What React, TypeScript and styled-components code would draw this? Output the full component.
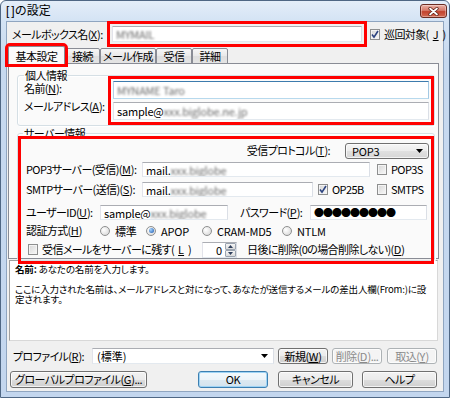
import React from "react";
import styled, { createGlobalStyle, css } from "styled-components";

const FONT = `"Noto Sans CJK JP", "Noto Sans", "DejaVu Sans", sans-serif`;

const GlobalStyle = createGlobalStyle`
  html, body { margin: 0; padding: 0; background: #ffffff; }
  body {
    font-family: ${FONT};
    font-size: 11px;
    color: #000;
    font-feature-settings: "palt";
  }
  *, *::before, *::after { box-sizing: border-box; }
`;

const redMark = css`
  outline: 3px solid #ff0000;
  outline-offset: 2px;
`;

const Window = styled.div`
  width: 450px;
  height: 398px;
  display: flex;
  flex-direction: column;
  border: 1px solid #4f6784;
  border-radius: 6px 6px 0 0;
  background: linear-gradient(180deg, #e4eef9 0px, #d4e3f4 20px, #c7d9ef 60px, #c3d6ee 100%);
  padding: 0 5px 5px 5px;
  overflow: hidden;
`;

const TitleBar = styled.div`
  height: 20px;
  flex: none;
  display: flex;
  align-items: flex-start;
  justify-content: space-between;
`;

const Title = styled.span`
  font-family: "Liberation Sans", "Noto Sans CJK JP", sans-serif;
  font-size: 12px;
  line-height: 21px;
  font-feature-settings: normal;
  letter-spacing: 0;
`;

const OpenBracket = styled.span`
  letter-spacing: 2px;
`;

const CloseButton = styled.div`
  width: 27px;
  height: 14px;
  margin-top: 3px;
  margin-right: -3px;
  border: 1px solid #6b2c22;
  border-radius: 3px;
  background: linear-gradient(180deg, #eab0a4 0%, #d77b6b 45%, #c2432e 55%, #d46a52 100%);
  box-shadow: inset 0 0 0 1px rgba(255, 255, 255, 0.35);
  display: flex;
  align-items: center;
  justify-content: center;
`;

const Client = styled.div`
  flex: 1;
  display: flex;
  flex-direction: column;
  background: #f0f0f0;
  border: 1px solid #8fa5c0;
`;

const TopRow = styled.div`
  height: 24px;
  flex: none;
  display: flex;
  align-items: center;
  padding-left: 5px;
`;

const Label = styled.span<{ $w?: number; $ml?: number }>`
  ${(p) => (p.$w ? `width: ${p.$w}px;` : "")}
  margin-left: ${(p) => p.$ml ?? 0}px;
  flex: none;
  white-space: nowrap;
  letter-spacing: -0.6px;
  line-height: 15px;
`;

const U = styled.span`
  text-decoration: underline;
  text-underline-offset: 1px;
  letter-spacing: 0;
`;

const TextBox = styled.div<{ $w?: number; $h?: number; $focus?: boolean; $mark?: boolean }>`
  ${(p) => (p.$w ? `width: ${p.$w}px; flex: none;` : "flex: 1;")}
  height: ${(p) => p.$h ?? 15}px;
  background: #ffffff;
  border: 1px solid;
  border-color: ${(p) =>
    p.$focus ? "#3d7bad #a4c9e3 #b7d9ed #b5cfe7" : "#abadb3 #dbdfe6 #e3e9ef #e2e3ea"};
  display: flex;
  align-items: center;
  padding: 0 3px;
  white-space: nowrap;
  overflow: hidden;
  letter-spacing: -0.2px;
  ${(p) => p.$mark && redMark}
`;

const Blurred = styled.span`
  color: #6d6d6d;
  filter: blur(1.1px);
`;

const CheckItem = styled.label<{ $w?: number; $ml?: number }>`
  display: inline-flex;
  align-items: center;
  gap: 4px;
  flex: none;
  ${(p) => (p.$w ? `width: ${p.$w}px;` : "")}
  margin-left: ${(p) => p.$ml ?? 0}px;
  white-space: nowrap;
  letter-spacing: -0.6px;
  line-height: 15px;
`;

const Check = styled.span`
  width: 10px;
  height: 11px;
  flex: none;
  border: 1px solid #8e8f8f;
  background: linear-gradient(135deg, #d6d6d6, #f9f9f9);
  box-shadow: inset 0 0 0 1px #f4f4f4;
  display: inline-flex;
  align-items: center;
  justify-content: center;
`;

const Radio = styled.span`
  width: 10px;
  height: 10px;
  flex: none;
  border-radius: 50%;
  border: 1px solid #8e8f8f;
  background: radial-gradient(circle at 35% 35%, #ffffff, #d2d2d2);
  display: inline-flex;
  align-items: center;
  justify-content: center;
`;

const RadioDot = styled.span`
  width: 5px;
  height: 5px;
  border-radius: 50%;
  background: radial-gradient(circle at 35% 35%, #a8d6ff, #1553ad);
`;

const TabStrip = styled.div`
  height: 18px;
  flex: none;
  display: flex;
  align-items: flex-end;
  padding-left: 3px;
  margin-bottom: -1px;
  position: relative;
  z-index: 2;
`;

const Tab = styled.div<{ $w: number; $active?: boolean }>`
  width: ${(p) => p.$w}px;
  height: ${(p) => (p.$active ? 18 : 16)}px;
  margin-left: ${(p) => (p.$active ? -2 : 0)}px;
  flex: none;
  border: 1px solid #898c95;
  border-bottom: ${(p) => (p.$active ? "none" : "1px solid #898c95")};
  border-radius: 2px 2px 0 0;
  background: ${(p) => (p.$active ? "#fafafa" : "linear-gradient(#f6f6f6, #e9e9e9 50%, #dedede 51%, #e4e4e4)")};
  display: flex;
  align-items: center;
  justify-content: center;
  letter-spacing: -0.5px;
  white-space: nowrap;
  position: relative;
  z-index: ${(p) => (p.$active ? 3 : 1)};
  ${(p) =>
    p.$active &&
    css`
      outline: 3px solid #ff0000;
      outline-offset: 0px;
    `}
`;

const TabPanel = styled.div`
  margin-left: 1px;
  width: 431px;
  height: 196px;
  flex: none;
  border: 1px solid #898c95;
  background: #fafafa;
  position: relative;
  z-index: 1;
  display: flex;
  flex-direction: column;
  padding: 5px 3px 0 8px;
`;

const Group = styled.fieldset<{ $mt?: number; $pl: number; $pb: number }>`
  margin: ${(p) => p.$mt ?? 0}px 0 0 0;
  padding: 0 5px ${(p) => p.$pb}px ${(p) => p.$pl}px;
  border: 1px solid #d5dfe5;
  border-radius: 3px;
  box-shadow: inset 1px 1px 0 #ffffff, 1px 1px 0 #ffffff;
  min-width: 0;
`;

const Legend = styled.legend`
  padding: 0 1px;
  line-height: 12px;
  letter-spacing: -0.5px;
`;

const PersonalBody = styled.div`
  display: flex;
`;

const LabelColumn = styled.div`
  width: 89px;
  flex: none;
  display: flex;
  flex-direction: column;
  gap: 3px;
`;

const InputColumn = styled.div`
  flex: 1;
  display: flex;
  flex-direction: column;
  gap: 3px;
  ${redMark}
`;

const ServerBody = styled.div`
  margin-top: 2px;
  padding: 0 0 2px 3px;
  display: flex;
  flex-direction: column;
  ${redMark}
`;

const Row = styled.div<{ $mt: number; $end?: boolean }>`
  height: 15px;
  margin-top: ${(p) => p.$mt}px;
  display: flex;
  align-items: center;
  justify-content: ${(p) => (p.$end ? "flex-end" : "flex-start")};
`;

const Select = styled.div<{ $w: number; $ml?: number }>`
  width: ${(p) => p.$w}px;
  height: 16px;
  flex: none;
  margin-left: ${(p) => p.$ml ?? 0}px;
  border: 1px solid #707070;
  border-radius: 3px;
  background: linear-gradient(#f6f6f6, #ececec 50%, #e0e0e0 51%, #d6d6d6);
  box-shadow: inset 0 0 0 1px rgba(255, 255, 255, 0.7);
  display: flex;
  align-items: center;
  justify-content: space-between;
  padding: 0 5px 0 6px;
  letter-spacing: -0.2px;
`;

const Password = styled.span`
  font-size: 10px;
  letter-spacing: -1px;
  line-height: 13px;
  font-feature-settings: normal;
`;

const RadioItem = styled.label<{ $w?: number }>`
  display: inline-flex;
  align-items: center;
  gap: 5px;
  flex: none;
  ${(p) => (p.$w ? `width: ${p.$w}px;` : "")}
  white-space: nowrap;
  letter-spacing: -0.2px;
`;

const Spin = styled.div`
  width: 35px;
  height: 16px;
  flex: none;
  display: flex;
  background: #ffffff;
  border: 1px solid;
  border-color: #abadb3 #dbdfe6 #e3e9ef #e2e3ea;
`;

const SpinValue = styled.span`
  flex: 1;
  text-align: right;
  padding-right: 3px;
  line-height: 14px;
`;

const SpinButtons = styled.div`
  width: 11px;
  flex: none;
  display: flex;
  flex-direction: column;
`;

const SpinBtn = styled.div`
  flex: 1;
  display: flex;
  align-items: center;
  justify-content: center;
  background: linear-gradient(#f6f6f6, #dadada);
  border: 1px solid #9ba4b0;
  border-radius: 1px;
`;

const HelpBox = styled.div`
  margin: 1px 0 0 2px;
  width: 429px;
  height: 81px;
  flex: none;
  background: #ffffff;
  border: 1px solid;
  border-color: #a0a0a0 #d8d8d8 #d8d8d8 #a0a0a0;
  padding: 3px 0 0 5px;
  font-size: 9.5px;
  line-height: 10px;
  letter-spacing: -0.15px;
  white-space: nowrap;
  overflow: hidden;
`;

const HelpLine = styled.div`
  height: 10px;
`;

const HelpKey = styled.span`
  font-weight: 700;
`;

const ProfileRow = styled.div`
  margin-top: 7px;
  height: 16px;
  flex: none;
  display: flex;
  align-items: center;
  padding-left: 6px;
`;

const Combo = styled.div`
  width: 182px;
  height: 16px;
  flex: none;
  background: #ffffff;
  border: 1px solid;
  border-color: #abadb3 #dbdfe6 #e3e9ef #e2e3ea;
  display: flex;
  align-items: center;
  justify-content: space-between;
  padding: 0 5px 0 4px;
`;

const Button = styled.button<{ $w: number; $ml?: number; $default?: boolean; $disabled?: boolean; $h?: number }>`
  width: ${(p) => p.$w}px;
  height: ${(p) => p.$h ?? 17}px;
  margin-left: ${(p) => p.$ml ?? 0}px;
  flex: none;
  padding: 0;
  font-family: ${FONT};
  font-size: 11px;
  font-feature-settings: "palt";
  letter-spacing: -0.5px;
  line-height: 1;
  color: ${(p) => (p.$disabled ? "#8a8a8a" : "#000")};
  border: 1px solid ${(p) => (p.$disabled ? "#adb2b5" : p.$default ? "#3c7fb1" : "#707070")};
  border-radius: 3px;
  background: ${(p) =>
    p.$disabled
      ? "#f4f4f4"
      : p.$default
      ? "linear-gradient(#f4f9fc, #ecf4f9 50%, #dde9f1 51%, #d3e3ee)"
      : "linear-gradient(#f2f2f2, #ebebeb 50%, #dddddd 51%, #cfcfcf)"};
  box-shadow: ${(p) =>
    p.$default ? "inset 0 0 0 1px #9fd4f5" : "inset 0 0 0 1px rgba(255, 255, 255, 0.75)"};
  display: flex;
  align-items: center;
  justify-content: center;
  white-space: nowrap;
`;

const BottomRow = styled.div`
  margin-top: 7px;
  height: 17px;
  flex: none;
  display: flex;
  align-items: center;
  justify-content: space-between;
  padding: 0 6px 0 3px;
`;

const ButtonGroup = styled.div`
  display: flex;
  align-items: center;
`;

const CheckMark = () => (
  <svg width="8" height="9" viewBox="0 0 8 9">
    <path d="M1 4.5 L3 7.2 L7 1" fill="none" stroke="#2c4380" strokeWidth="1.6" />
  </svg>
);

const DownArrow = () => (
  <svg width="7" height="4" viewBox="0 0 7 4">
    <path d="M0 0 H7 L3.5 4 Z" fill="#000" />
  </svg>
);

const TinyArrow = ({ up }: { up?: boolean }) => (
  <svg width="5" height="3" viewBox="0 0 5 3">
    <path d={up ? "M0 3 L2.5 0 L5 3 Z" : "M0 0 L2.5 3 L5 0 Z"} fill="#2f3f5c" />
  </svg>
);

const CloseIcon = () => (
  <svg width="11" height="9" viewBox="0 0 11 9">
    <path d="M2 1.5 L9 7.5 M9 1.5 L2 7.5" stroke="#5a1e14" strokeWidth="3.2" strokeLinecap="round" />
    <path d="M2 1.5 L9 7.5 M9 1.5 L2 7.5" stroke="#ffffff" strokeWidth="1.7" strokeLinecap="round" />
  </svg>
);

export default function App() {
  return (
    <>
      <GlobalStyle />
      <Window>
        <TitleBar>
          <Title>
            <OpenBracket>[</OpenBracket>]の設定
          </Title>
          <CloseButton>
            <CloseIcon />
          </CloseButton>
        </TitleBar>
        <Client>
          <TopRow>
            <Label $w={100}>
              メールボックス名(<U>X</U>):
            </Label>
            <TextBox $w={250} $h={16} $mark>
              <Blurred>MYMAIL</Blurred>
            </TextBox>
            <CheckItem $ml={8}>
              <Check>
                <CheckMark />
              </Check>
              巡回対象(<U>J</U>)
            </CheckItem>
          </TopRow>

          <TabStrip>
            <Tab $w={57} $active>基本設定</Tab>
            <Tab $w={35}>接続</Tab>
            <Tab $w={56}>メール作成</Tab>
            <Tab $w={36}>受信</Tab>
            <Tab $w={36}>詳細</Tab>
          </TabStrip>

          <TabPanel>
            <Group $pl={6} $pb={5}>
              <Legend>個人情報</Legend>
              <PersonalBody>
                <LabelColumn>
                  <Label>
                    名前(<U>N</U>):
                  </Label>
                  <Label>
                    メールアドレス(<U>A</U>):
                  </Label>
                </LabelColumn>
                <InputColumn>
                  <TextBox $focus>
                    <Blurred>MYNAME Taro</Blurred>
                  </TextBox>
                  <TextBox>
                    sample@<Blurred>xxx.biglobe.ne.jp</Blurred>
                  </TextBox>
                </InputColumn>
              </PersonalBody>
            </Group>

            <Group $mt={1} $pl={5} $pb={1}>
              <Legend>サーバー情報</Legend>
              <ServerBody>
                <Row $mt={2} $end>
                  <Label>
                    受信プロトコル(<U>T</U>):
                  </Label>
                  <Select $w={84} $ml={15}>
                    <span>POP3</span>
                    <DownArrow />
                  </Select>
                </Row>
                <Row $mt={4}>
                  <Label $w={116}>
                    POP3サーバー(受信)(<U>M</U>):
                  </Label>
                  <TextBox $w={228}>
                    mail.<Blurred>xxx.biglobe</Blurred>
                  </TextBox>
                  <CheckItem $ml={7}>
                    <Check />
                    POP3S
                  </CheckItem>
                </Row>
                <Row $mt={5}>
                  <Label $w={116}>
                    SMTPサーバー(送信)(<U>S</U>):
                  </Label>
                  <TextBox $w={171}>
                    mail.<Blurred>xxx.biglobe</Blurred>
                  </TextBox>
                  <CheckItem $w={59} $ml={5}>
                    <Check>
                      <CheckMark />
                    </Check>
                    OP25B
                  </CheckItem>
                  <CheckItem>
                    <Check />
                    SMTPS
                  </CheckItem>
                </Row>
                <Row $mt={8}>
                  <Label $w={74}>
                    ユーザーID(<U>U</U>):
                  </Label>
                  <TextBox $w={128}>
                    sample@<Blurred>xxx.biglobe</Blurred>
                  </TextBox>
                  <Label $w={70} $ml={12}>
                    パスワード(<U>P</U>):
                  </Label>
                  <TextBox $w={117}>
                    <Password>●●●●●●●●●</Password>
                  </TextBox>
                </Row>
                <Row $mt={3}>
                  <Label $w={74}>
                    認証方式(<U>H</U>)
                  </Label>
                  <RadioItem $w={46}>
                    <Radio />
                    標準
                  </RadioItem>
                  <RadioItem $w={56}>
                    <Radio>
                      <RadioDot />
                    </Radio>
                    APOP
                  </RadioItem>
                  <RadioItem $w={80}>
                    <Radio />
                    CRAM-MD5
                  </RadioItem>
                  <RadioItem>
                    <Radio />
                    NTLM
                  </RadioItem>
                </Row>
                <Row $mt={4}>
                  <CheckItem $w={174} $ml={2}>
                    <Check />
                    受信メールをサーバーに残す(<U>L</U>)
                  </CheckItem>
                  <Spin>
                    <SpinValue>0</SpinValue>
                    <SpinButtons>
                      <SpinBtn>
                        <TinyArrow up />
                      </SpinBtn>
                      <SpinBtn>
                        <TinyArrow />
                      </SpinBtn>
                    </SpinButtons>
                  </Spin>
                  <Label $ml={10}>
                    日後に削除(0の場合削除しない)(<U>D</U>)
                  </Label>
                </Row>
              </ServerBody>
            </Group>
          </TabPanel>

          <HelpBox>
            <HelpLine>
              <HelpKey>名前:</HelpKey> あなたの名前を入力します。
            </HelpLine>
            <HelpLine />
            <HelpLine>
              ここに入力された名前は、メールアドレスと対になって、あなたが送信するメールの差出人欄(From:)に設
            </HelpLine>
            <HelpLine>定されます。</HelpLine>
          </HelpBox>

          <ProfileRow>
            <Label $w={79}>
              プロファイル(<U>R</U>):
            </Label>
            <Combo>
              <span>(標準)</span>
              <DownArrow />
            </Combo>
            <Button $w={50} $ml={4} $h={16}>
              新規(<U>W</U>)
            </Button>
            <Button $w={50} $ml={4} $h={16} $disabled>
              削除(<U>D</U>)...
            </Button>
            <Button $w={50} $ml={5} $h={16} $disabled>
              取込(<U>Y</U>)
            </Button>
          </ProfileRow>

          <BottomRow>
            <Button $w={137}>
              グローバルプロファイル(<U>G</U>)...
            </Button>
            <ButtonGroup>
              <Button $w={70} $default>
                OK
              </Button>
              <Button $w={75} $ml={10}>
                キャンセル
              </Button>
              <Button $w={75} $ml={9}>
                ヘルプ
              </Button>
            </ButtonGroup>
          </BottomRow>
        </Client>
      </Window>
    </>
  );
}
